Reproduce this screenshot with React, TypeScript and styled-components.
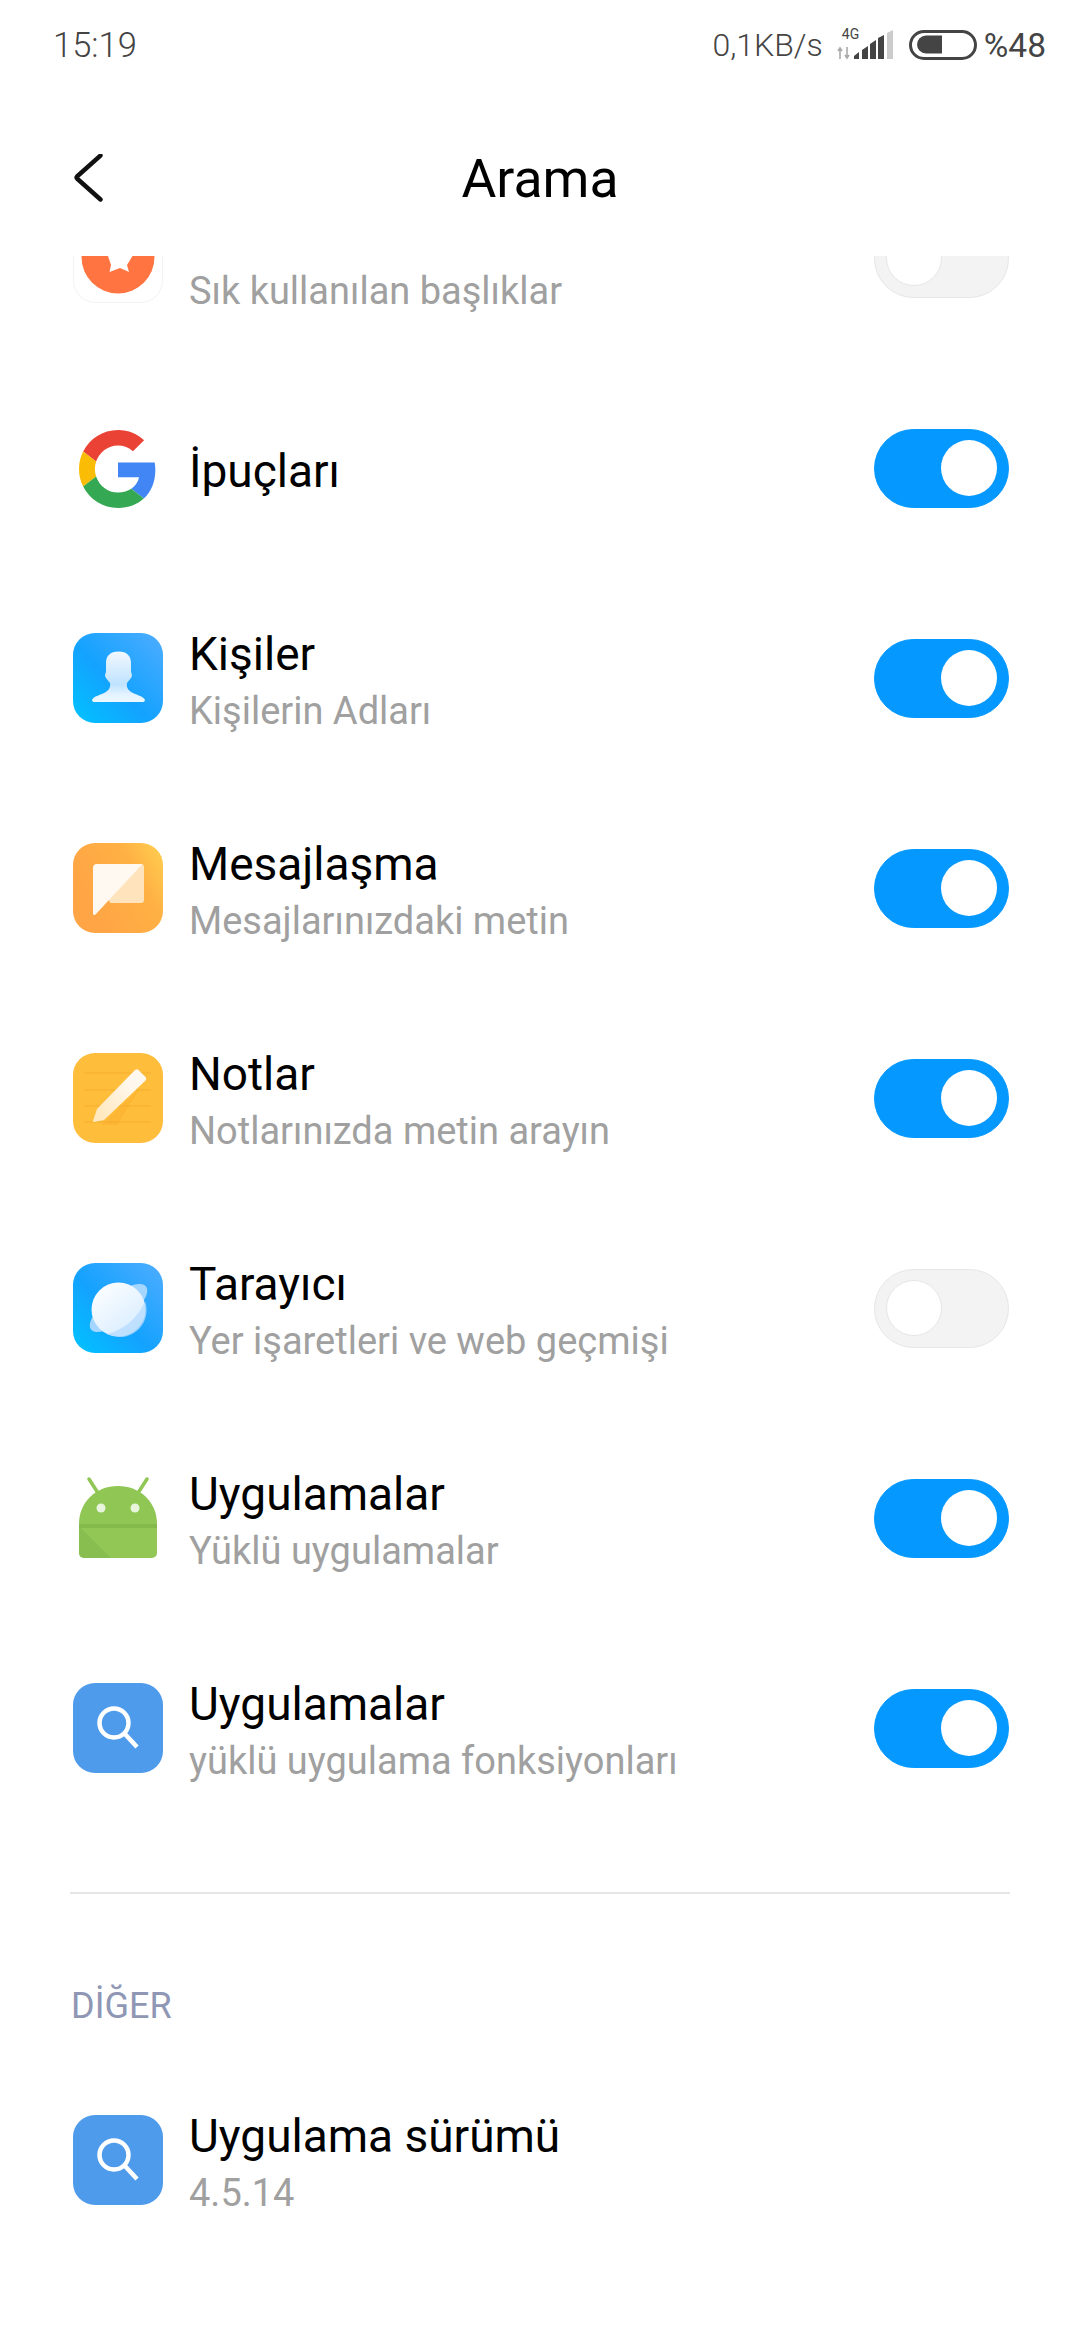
import React from 'react';
import styled, { createGlobalStyle } from 'styled-components';

const GlobalStyle = createGlobalStyle`
  html, body {
    margin: 0;
    padding: 0;
    background: #fff;
    font-family: Roboto, "Noto Sans", sans-serif;
  }
`;

const Page = styled.div`
  width: 1080px;
  height: 2340px;
  overflow: hidden;
  background: #fff;
`;

const StatusBar = styled.div`
  height: 90px;
  padding: 0 34px 0 53px;
  box-sizing: border-box;
  display: flex;
  align-items: center;
  justify-content: space-between;
  color: #444;
  font-size: 32px;
  font-weight: 300;
`;

const Clock = styled.span`
  font-size: 34.5px;
`;

const StatusRight = styled.div`
  display: flex;
  align-items: center;
`;

const Speed = styled.span`
  margin-right: 14px;
`;

const Percent = styled.span`
  margin-left: 7px;
  font-size: 33.5px;
  font-weight: 400;
`;

const SignalWrap = styled.div`
  position: relative;
  width: 58px;
  height: 32px;
  margin-right: 14px;
`;

const NetLabel = styled.span`
  position: absolute;
  left: 5px;
  top: -3px;
  font-size: 14px;
  line-height: 16px;
  font-weight: 400;
  color: #444;
`;

const NavBar = styled.div`
  height: 166px;
  padding: 12px 72px 0;
  box-sizing: border-box;
  display: grid;
  grid-template-columns: 1fr auto 1fr;
  align-items: center;
`;

const NavTitle = styled.div`
  font-size: 53.5px;
  line-height: 60px;
  color: #000;
`;

const ListClip = styled.div`
  overflow: hidden;
`;

const List = styled.div`
  margin-top: -103px;
`;

const Row = styled.div`
  height: 210px;
  padding: 0 71px 0 73px;
  box-sizing: border-box;
  display: flex;
  align-items: center;
`;

const IconBox = styled.div`
  width: 90px;
  height: 90px;
  flex-shrink: 0;
  svg {
    display: block;
  }
`;

const TextBlock = styled.div<{ $single: boolean }>`
  flex: 1;
  margin-left: 26px;
  padding-top: ${({ $single }) => ($single ? '6px' : '10px')};
`;

const Title = styled.div`
  font-size: 46px;
  line-height: 56px;
  color: #000;
`;

const Sub = styled.div`
  font-size: 38px;
  line-height: 58px;
  color: #a0a0a0;
`;

const Toggle = styled.div<{ $on: boolean }>`
  width: 135px;
  height: 79px;
  box-sizing: border-box;
  border-radius: 40px;
  display: flex;
  align-items: center;
  background: ${({ $on }) => ($on ? '#0598ff' : '#f3f3f3')};
  border: 1px solid ${({ $on }) => ($on ? '#0598ff' : '#e6e6e6')};
  justify-content: ${({ $on }) => ($on ? 'flex-end' : 'flex-start')};
  padding: 0 11px;
`;

const Knob = styled.div<{ $on: boolean }>`
  width: 56px;
  height: 56px;
  box-sizing: border-box;
  border-radius: 50%;
  background: #fff;
  border: ${({ $on }) => ($on ? 'none' : '1px solid #e6e6e6')};
`;

const Divider = styled.div`
  height: 2px;
  margin: 59px 70px 0;
  background: #e6e6e6;
`;

const SectionLabel = styled.div`
  margin: 87px 0 24px 71px;
  font-size: 36px;
  line-height: 50px;
  color: #8f97b5;
`;

const BackIcon = () => (
  <svg width="34" height="50" viewBox="0 0 34 50" fill="none">
    <path d="M28.5 1.500 L5 22.500 Q4 23.500 5 24.500 L28.500 45.500" stroke="#111" strokeWidth="4.400" strokeLinecap="round" strokeLinejoin="round" />
  </svg>
);

const SignalIcon = () => (
  <svg width="58" height="32" viewBox="0 0 58 32" style={{ position: 'absolute', left: 0, top: 0 }}>
    <path d="M3 19v11M1 22l2-3 2 3M10 18v11M8 26l2 3 2-3" stroke="#aaa" strokeWidth="1.600" fill="none" />
    <path d="M17 30v-3l5-4v7zM25 30v-9l6-4v13zM33 30v-15l6-4v19zM41 30v-21l6-3v24z" fill="#444" />
    <path d="M50 30V4l6-3v29z" fill="#ccc" />
  </svg>
);

const BatteryIcon = () => (
  <svg width="68" height="30" viewBox="0 0 68 30">
    <rect x="1.500" y="1.500" width="65" height="27" rx="13.500" fill="none" stroke="#444" strokeWidth="3" />
    <path d="M17 5.500h16v18H17a9 9 0 0 1 0-18z" fill="#444" />
  </svg>
);

const FrequentIcon = () => (
  <svg width="90" height="90" viewBox="0 0 90 90">
    <rect x="0.500" y="0.500" width="89" height="89" rx="22" fill="#fff" stroke="#f2f2f2" />
    <circle cx="45" cy="44" r="36.500" fill="#ff7440" />
    <path d="M34 40 L61 40 L59.500 43 L54 52 L56 59 L47 55 L36.500 59 L38 52 L35 43z" fill="#fff" />
  </svg>
);

const GoogleIcon = () => (
  <svg width="90" height="90" viewBox="0 0 90 90">
    <g transform="translate(6 7) scale(1.625)">
      <path fill="#EA4335" d="M24 9.500c3.540 0 6.710 1.220 9.210 3.600l6.850-6.850C35.900 2.380 30.470 0 24 0 14.620 0 6.510 5.380 2.560 13.220l7.980 6.190C12.430 13.720 17.740 9.500 24 9.500z" />
      <path fill="#4285F4" d="M46.980 24.550c0-1.570-.15-3.090-.38-4.550H24v9.020h12.940c-.58 2.960-2.260 5.480-4.780 7.180l7.730 6c4.510-4.180 7.090-10.360 7.090-17.650z" />
      <path fill="#FBBC05" d="M10.530 28.590c-.48-1.450-.76-2.990-.76-4.590s.27-3.140.76-4.590l-7.980-6.190C.92 16.460 0 20.120 0 24c0 3.880.92 7.540 2.560 10.780l7.970-6.190z" />
      <path fill="#34A853" d="M24 48c6.480 0 11.930-2.130 15.890-5.810l-7.730-6c-2.150 1.450-4.920 2.300-8.160 2.300-6.260 0-11.570-4.220-13.470-9.910l-7.980 6.190C6.510 42.620 14.620 48 24 48z" />
    </g>
  </svg>
);

const ContactsIcon = () => (
  <svg width="90" height="90" viewBox="0 0 90 90">
    <defs>
      <linearGradient id="contactBg" x1="0" y1="1" x2="1" y2="0">
        <stop offset="0" stopColor="#00c3ff" />
        <stop offset="0.45" stopColor="#14a2ff" />
        <stop offset="1" stopColor="#4fadff" />
      </linearGradient>
      <linearGradient id="contactFg" x1="0" y1="0" x2="0" y2="1">
        <stop offset="0" stopColor="#f2f8ff" />
        <stop offset="0.65" stopColor="#bfe3ff" />
        <stop offset="0.85" stopColor="#e3f3ff" />
        <stop offset="1" stopColor="#eef8ff" />
      </linearGradient>
    </defs>
    <rect width="90" height="90" rx="22" fill="url(#contactBg)" />
    <path d="M45.500 18.500C37 18.500 33 23 33 30V38C33 40 32 41 32 42C32 45 35 47 37 50C38 55 35 58 31 60C27 62 22 63 19.500 66C18.500 67.500 19.500 69 21 69H70C71.500 69 72.500 67.500 71.500 66C69 63 64 62 60 60C56 58 53 55 54 50C56 47 59 45 59 42C59 41 58 40 58 38V30C58 23 54 18.500 45.500 18.500Z" fill="url(#contactFg)" />
  </svg>
);

const MessageIcon = () => (
  <svg width="90" height="90" viewBox="0 0 90 90">
    <defs>
      <linearGradient id="msgBg" x1="0.1" y1="0.5" x2="1" y2="0">
        <stop offset="0" stopColor="#ffa545" />
        <stop offset="0.6" stopColor="#ffb144" />
        <stop offset="1" stopColor="#ffd050" />
      </linearGradient>
    </defs>
    <rect width="90" height="90" rx="22" fill="url(#msgBg)" />
    <path d="M24 21h44a3 3 0 0 1 3 3v33a3 3 0 0 1-3 3H37z" fill="#ffe3bd" />
    <path d="M24 21h45.500L22.500 71.500c-1 1-2.500.5-2.500-1V25a4 4 0 0 1 4-4z" fill="#fff9f1" />
  </svg>
);

const NotesIcon = () => (
  <svg width="90" height="90" viewBox="0 0 90 90">
    <defs>
      <linearGradient id="penFg" x1="0.2" y1="0.9" x2="0.8" y2="0.4">
        <stop offset="0" stopColor="#ffe9c0" />
        <stop offset="1" stopColor="#fff8ee" />
      </linearGradient>
    </defs>
    <rect width="90" height="90" rx="22" fill="#ffbd3c" />
    <path d="M11 20h67M11 37h67M11 53h67M11 69h67" stroke="#f3ab2c" strokeWidth="0.900" />
    <path d="M28 72 L68 34 L44 72z" fill="#f7a51e" opacity="0.28" />
    <path d="M20 68c0 .5.4 1 1 .9l10-2 41-39c1.500-1.500 1.500-3 .5-4l-7-7c-1-1-2.500-1-4 .5L24 56z" fill="url(#penFg)" />
  </svg>
);

const BrowserIcon = () => (
  <svg width="90" height="90" viewBox="0 0 90 90">
    <defs>
      <linearGradient id="browserBg" x1="0" y1="1" x2="1" y2="0">
        <stop offset="0" stopColor="#00c3ff" />
        <stop offset="0.45" stopColor="#14a2ff" />
        <stop offset="1" stopColor="#4fadff" />
      </linearGradient>
      <linearGradient id="planet" x1="0.2" y1="0.1" x2="0.8" y2="0.9">
        <stop offset="0" stopColor="#fafdff" />
        <stop offset="1" stopColor="#d9edff" />
      </linearGradient>
    </defs>
    <rect width="90" height="90" rx="22" fill="url(#browserBg)" />
    <ellipse cx="45.500" cy="45" rx="35" ry="13.500" transform="rotate(-38 45.500 45)" fill="#a4d6ff" />
    <circle cx="45.500" cy="46.500" r="27" fill="url(#planet)" />
    <path d="M72 38C65 55 51 67 34 71A27 27 0 0 0 72 38Z" fill="#b4dbff" opacity="0.75" />
  </svg>
);

const AndroidIcon = () => (
  <svg width="90" height="90" viewBox="0 0 90 90">
    <path d="M16 6 L25 20M74 6 L65 20" stroke="#8fc654" strokeWidth="3.500" strokeLinecap="round" />
    <path d="M6 51C6 29 23 13 45 13s39 16 39 38z" fill="#8fc654" />
    <path d="M6 51h78v29a5 5 0 0 1-5 5H11a5 5 0 0 1-5-5z" fill="#92c755" />
    <path d="M6 51h78v4H6z" fill="#7fb549" opacity="0.7" />
    <path d="M6 53 L38 85H11a5 5 0 0 1-5-5z" fill="#84bb4e" opacity="0.7" />
    <circle cx="28" cy="35" r="4.500" fill="#e9f4dc" />
    <circle cx="62" cy="35" r="4.500" fill="#e9f4dc" />
  </svg>
);

const SearchIcon = () => (
  <svg width="90" height="90" viewBox="0 0 90 90">
    <rect width="90" height="90" rx="22" fill="#4e9bec" />
    <circle cx="41" cy="40" r="14.500" fill="none" stroke="#fff" strokeWidth="4.500" />
    <path d="M51.500 50.500 L64 64" stroke="#fff" strokeWidth="4.500" />
  </svg>
);

const rows = [
  { icon: <FrequentIcon />, title: '\u00a0', sub: 'Sık kullanılan başlıklar', on: false },
  { icon: <GoogleIcon />, title: 'İpuçları', on: true },
  { icon: <ContactsIcon />, title: 'Kişiler', sub: 'Kişilerin Adları', on: true },
  { icon: <MessageIcon />, title: 'Mesajlaşma', sub: 'Mesajlarınızdaki metin', on: true },
  { icon: <NotesIcon />, title: 'Notlar', sub: 'Notlarınızda metin arayın', on: true },
  { icon: <BrowserIcon />, title: 'Tarayıcı', sub: 'Yer işaretleri ve web geçmişi', on: false },
  { icon: <AndroidIcon />, title: 'Uygulamalar', sub: 'Yüklü uygulamalar', on: true },
  { icon: <SearchIcon />, title: 'Uygulamalar', sub: 'yüklü uygulama fonksiyonları', on: true },
];

export default function App() {
  return (
    <Page>
      <GlobalStyle />
      <StatusBar>
        <Clock>15:19</Clock>
        <StatusRight>
          <Speed>0,1KB/s</Speed>
          <SignalWrap>
            <NetLabel>4G</NetLabel>
            <SignalIcon />
          </SignalWrap>
          <BatteryIcon />
          <Percent>%48</Percent>
        </StatusRight>
      </StatusBar>
      <NavBar>
        <BackIcon />
        <NavTitle>Arama</NavTitle>
        <span />
      </NavBar>
      <ListClip>
        <List>
          {rows.map((row) => (
            <Row key={row.sub ?? row.title}>
              <IconBox>{row.icon}</IconBox>
              <TextBlock $single={!row.sub}>
                <Title>{row.title}</Title>
                {row.sub && <Sub>{row.sub}</Sub>}
              </TextBlock>
              <Toggle $on={row.on}>
                <Knob $on={row.on} />
              </Toggle>
            </Row>
          ))}
        </List>
      </ListClip>
      <Divider />
      <SectionLabel>DİĞER</SectionLabel>
      <Row>
        <IconBox>
          <SearchIcon />
        </IconBox>
        <TextBlock $single={false}>
          <Title>Uygulama sürümü</Title>
          <Sub>4.5.14</Sub>
        </TextBlock>
      </Row>
    </Page>
  );
}
